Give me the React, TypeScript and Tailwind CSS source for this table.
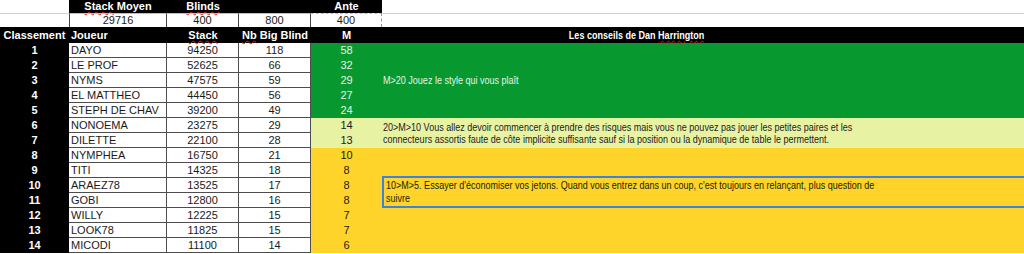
import React from "react";

type Player = { rank: number; name: string; stack: number; bb: number; m: number };

const players: Player[] = [
  { rank: 1, name: "DAYO", stack: 94250, bb: 118, m: 58 },
  { rank: 2, name: "LE PROF", stack: 52625, bb: 66, m: 32 },
  { rank: 3, name: "NYMS", stack: 47575, bb: 59, m: 29 },
  { rank: 4, name: "EL MATTHEO", stack: 44450, bb: 56, m: 27 },
  { rank: 5, name: "STEPH DE CHAV", stack: 39200, bb: 49, m: 24 },
  { rank: 6, name: "NONOEMA", stack: 23275, bb: 29, m: 14 },
  { rank: 7, name: "DILETTE", stack: 22100, bb: 28, m: 13 },
  { rank: 8, name: "NYMPHEA", stack: 16750, bb: 21, m: 10 },
  { rank: 9, name: "TITI", stack: 14325, bb: 18, m: 8 },
  { rank: 10, name: "ARAEZ78", stack: 13525, bb: 17, m: 8 },
  { rank: 11, name: "GOBI", stack: 12800, bb: 16, m: 8 },
  { rank: 12, name: "WILLY", stack: 12225, bb: 15, m: 7 },
  { rank: 13, name: "LOOK78", stack: 11825, bb: 15, m: 7 },
  { rank: 14, name: "MICODI", stack: 11100, bb: 14, m: 6 },
];

// spell-check squiggle like the spreadsheet shows
const squiggle = "underline decoration-wavy decoration-[#e0201c] decoration-1 underline-offset-[1px]";

// Arial Narrow look: regular Liberation Sans squeezed to 82%
function Narrow({ children, center }: { children: React.ReactNode; center?: boolean }) {
  return (
    <span
      className={
        "inline-block whitespace-nowrap scale-x-[0.82] " + (center ? "origin-center" : "origin-left")
      }
    >
      {children}
    </span>
  );
}

export default function App() {
  const green = players.slice(0, 5);
  const lime = players.slice(5, 7);
  const yellow = players.slice(7);

  return (
    <div className="w-[1024px] h-[254px] overflow-hidden bg-white font-['Liberation_Sans',Arial,sans-serif] text-[11px] text-[#1a1a1a]">
      {/* row 1 : summary headings */}
      <div className="flex h-[13px] leading-[13px]">
        <div className="w-[69px]" />
        <div className="flex w-[313px] bg-black font-bold text-white">
          <div className="w-[98px] text-center">
            <span className={squiggle}>Stack</span> Moyen
          </div>
          <div className="w-[72px] text-center">
            <span className={squiggle}>Blinds</span>
          </div>
          <div className="w-[72px]" />
          <div className="w-[71px] text-center">Ante</div>
        </div>
        <div className="flex-1" />
      </div>

      {/* row 2 : summary values */}
      <div className="flex h-[14px] leading-[13px]">
        <div className="w-[69px] border-t border-[#d0d0d0]" />
        <div className="w-[98px] border-t border-l border-r border-t-[#bdbdbd] border-x-[#444] text-center">29716</div>
        <div className="w-[72px] border-t border-r border-t-[#bdbdbd] border-r-[#444] text-center">400</div>
        <div className="w-[72px] border-t border-r border-t-[#bdbdbd] border-r-[#444] text-center">800</div>
        <div className="w-[71px] border-t border-r border-dashed border-t-[#bdbdbd] border-r-[#9a9a9a] text-center">400</div>
        <div className="flex-1 border-t border-[#d0d0d0]" />
      </div>

      {/* row 3 : column headings */}
      <div className="flex h-[16px] bg-black font-bold leading-[16px] text-white">
        <div className="w-[69px] text-center">Classement</div>
        <div className="w-[98px] pl-[2px]">Joueur</div>
        <div className="w-[72px] text-center">
          <span className={squiggle}>Stack</span>
        </div>
        <div className="w-[72px] text-center">
          <span className={squiggle}>Nb</span> Big Blind
        </div>
        <div className="w-[71px] text-center">M</div>
        <div className="w-[510px] text-center">
          <Narrow center>
            Les conseils de Dan <span className={squiggle}>Harrington</span>
          </Narrow>
        </div>
        <div className="flex-1" />
      </div>

      {/* body */}
      <div className="flex">
        <div className="w-[311px] shrink-0">
          {players.map((p) => (
            <div key={p.rank} className="flex h-[15px] leading-[14px]">
              <div className="w-[69px] bg-black text-center font-bold text-white">{p.rank}</div>
              <div className="w-[98px] border-b border-r border-[#4d4d4d] pl-[2px] whitespace-nowrap">{p.name}</div>
              <div className="w-[72px] border-b border-r border-[#4d4d4d] text-center">{p.stack}</div>
              <div className="w-[72px] border-b border-r border-[#4d4d4d] text-center">{p.bb}</div>
            </div>
          ))}
        </div>

        <div className="w-[713px] shrink-0">
          <Band rows={green} bg="bg-[#07992f]" text="text-[#e6f3e4]">
            <div className="flex h-full items-center pl-[1px]">
              <Narrow>M&gt;20 Jouez le style qui vous plaît</Narrow>
            </div>
          </Band>
          <Band rows={lime} bg="bg-[#e8f2a3]" text="text-[#222]">
            <div className="flex h-full flex-col justify-center pl-[1px] leading-[12px]">
              <div>
                <Narrow>
                  20&gt;M&gt;10 Vous allez devoir commencer à prendre des risques mais vous ne pouvez pas jouer les petites paires et les
                </Narrow>
              </div>
              <div>
                <Narrow>
                  connecteurs assortis faute de côte implicite suffisante sauf si la position ou la dynamique de table le permettent.
                </Narrow>
              </div>
            </div>
          </Band>
          <Band rows={yellow} bg="bg-[#fed42a]" text="text-[#221c00]">
            {/* selected cell: outline runs past the right edge */}
            <div className="mt-[28px] h-[32px] border-y-2 border-l-2 border-[#3f82d8] py-[1px] pl-[2px] leading-[13px]">
              <div>
                <Narrow>
                  10&gt;M&gt;5. Essayer d'économiser vos jetons. Quand vous entrez dans un coup, c'est toujours en relançant, plus question de
                </Narrow>
              </div>
              <div>
                <Narrow>suivre</Narrow>
              </div>
            </div>
          </Band>
        </div>
      </div>
    </div>
  );
}

function Band({
  rows,
  bg,
  text,
  children,
}: {
  rows: Player[];
  bg: string;
  text: string;
  children: React.ReactNode;
}) {
  return (
    <div className={"flex " + bg + " " + text}>
      <div className="w-[71px] shrink-0">
        {rows.map((p) => (
          <div key={p.rank} className="h-[15px] text-center leading-[15px]">
            {p.m}
          </div>
        ))}
      </div>
      <div className="w-[642px] shrink-0">{children}</div>
    </div>
  );
}
